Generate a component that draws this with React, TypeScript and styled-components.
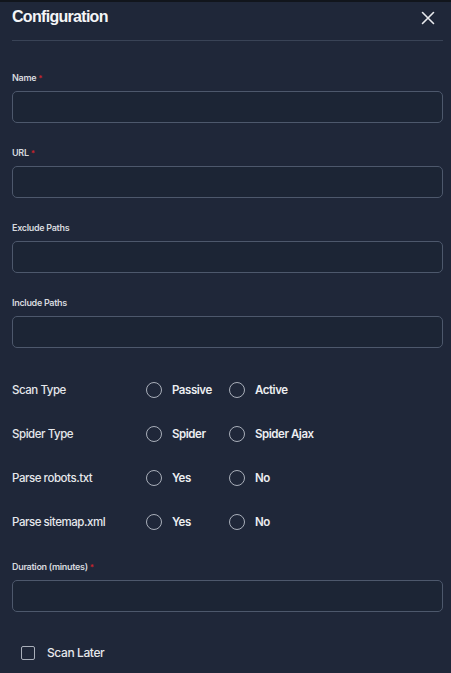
import styled, { createGlobalStyle } from "styled-components"

const Global = createGlobalStyle`
body{
margin:0;
background:#1f2739;
font-family:Inter, "Liberation Sans", Arial, sans-serif;
}
`

const fields = [
  { label: "Name", req: true },
  { label: "URL", req: true },
  { label: "Exclude Paths", req: false },
  { label: "Include Paths", req: false },
]

const radios = [
  { label: "Scan Type", opts: ["Passive", "Active"] },
  { label: "Spider Type", opts: ["Spider", "Spider Ajax"] },
  { label: "Parse robots.txt", opts: ["Yes", "No"] },
  { label: "Parse sitemap.xml", opts: ["Yes", "No"] },
]

const App = () => {
  return (
    <Panel>
      <Global />
      <Header>
        <Title>Configuration</Title>
        <Close aria-label="close">
          <svg width="14" height="14" viewBox="0 0 14 14">
            <path d="M1.5 1.5L12.5 12.5M12.5 1.5L1.5 12.5" stroke="#e8eaee" strokeWidth="1.6" strokeLinecap="round" />
          </svg>
        </Close>
      </Header>
      <Form>
        {fields.map((f) => (
          <Field key={f.label}>
            <Label>
              {f.label}
              {f.req && <Star>*</Star>}
            </Label>
            <Input />
          </Field>
        ))}
        <Radios>
          {radios.map((r) => (
            <RadioRow key={r.label}>
              <RowLabel>{r.label}</RowLabel>
              {r.opts.map((o) => (
                <Option key={o}>
                  <Circle />
                  <OptText>{o}</OptText>
                </Option>
              ))}
            </RadioRow>
          ))}
        </Radios>
        <Field>
          <Label>
            Duration (minutes)<Star>*</Star>
          </Label>
          <Input />
        </Field>
        <Check>
          <Box />
          <CheckText>Scan Later</CheckText>
        </Check>
      </Form>
    </Panel>
  )
}

export default App

const Panel = styled.div`
min-height: 673px;
box-sizing: border-box;
border-top: 2px solid #11151c;
background: #1f2739;
`
const Header = styled.div`
margin: 0 8px 0 12px;
height: 38px;
border-bottom: 1px solid #394356;
display: flex;
align-items: center;
justify-content: space-between;
`
const Title = styled.div`
color: #f4f5f7;
font-family: "Liberation Sans", Arial, sans-serif;
font-size: 16px;
font-weight: 700;
letter-spacing: -0.7px;
margin-top: -8px;
`
const Close = styled.div`
width: 14px;
height: 14px;
margin-right: 8px;
margin-top: -7px;
display: flex;
`
const Form = styled.div`
padding: 31px 8px 0 12px;
display: flex;
flex-direction: column;
`
const Field = styled.div`
display: flex;
flex-direction: column;
margin-bottom: 24px;
`
const Label = styled.div`
font-size: 9px;
line-height: 12px;
font-weight: 600;
color: #d6d9df;
letter-spacing: -0.3px;
margin-bottom: 7px;
`
const Star = styled.span`
color: #c8232c;
font-size: 8px;
vertical-align: top;
margin-left: 2px;
`
const Input = styled.div`
height: 32px;
box-sizing: border-box;
border: 1.5px solid #4d586c;
border-radius: 5px;
background: #1c2535;
`
const Radios = styled.div`
display: flex;
flex-direction: column;
margin-top: -4px;
margin-bottom: 17px;
`
const RadioRow = styled.div`
height: 44px;
display: flex;
align-items: center;
`
const RowLabel = styled.div`
width: 134px;
font-size: 11.5px;
font-weight: 500;
color: #e6e8ec;
letter-spacing: -0.45px;
`
const Option = styled.div`
width: 83px;
display: flex;
align-items: center;
white-space: nowrap;
`
const Circle = styled.div`
width: 16px;
height: 16px;
flex-shrink: 0;
box-sizing: border-box;
border: 1.5px solid #a9afba;
border-radius: 50%;
margin-right: 10px;
`
const OptText = styled.div`
font-size: 11.5px;
color: #eceef1;
letter-spacing: -0.45px;
font-weight: 600;
`
const Check = styled.div`
display: flex;
align-items: center;
padding-left: 9px;
margin-top: 9px;
`
const Box = styled.div`
width: 14px;
height: 14px;
box-sizing: border-box;
border: 1.5px solid #a9afba;
border-radius: 2px;
margin-right: 12px;
`
const CheckText = styled.div`
font-size: 12px;
font-weight: 500;
color: #e6e8ec;
letter-spacing: -0.4px;
`
